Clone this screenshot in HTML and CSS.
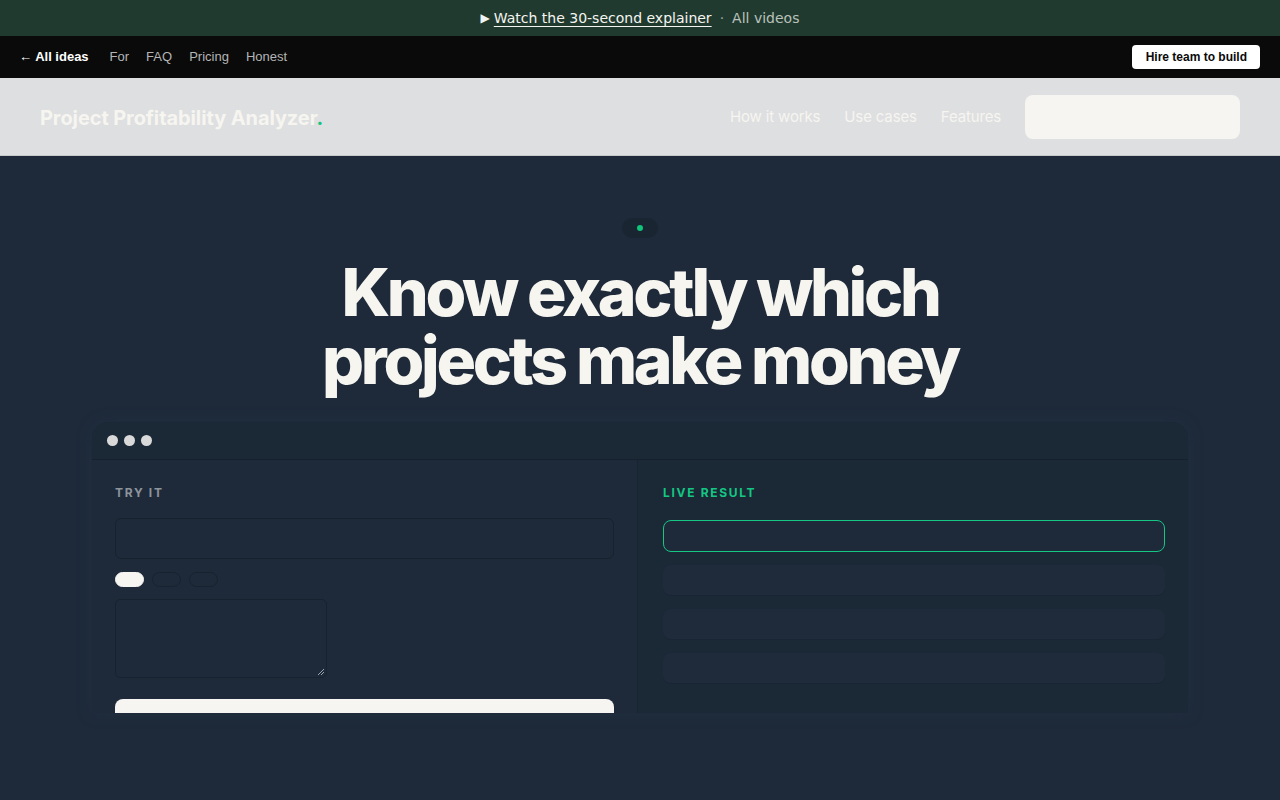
FILE: index.html
```html
<!DOCTYPE html>
<html>
<head>
<meta charset="utf-8">
<link rel="stylesheet" href="styles.css">
</head>
<body>
<div class="promo">
  <span class="play">▶</span> <a class="promo-link" href="#">Watch the 30-second explainer</a>
  <span class="sep">·</span>
  <a class="promo-all" href="#">All videos</a>
</div>
<nav class="topnav">
  <div class="topnav-left">
    <a class="back" href="#">← All ideas</a>
    <a class="tlink" href="#">For</a>
    <a class="tlink" href="#">FAQ</a>
    <a class="tlink" href="#">Pricing</a>
    <a class="tlink" href="#">Honest</a>
  </div>
  <a class="hire" href="#">Hire team to build</a>
</nav>
<header class="site-header">
  <div class="logo">Project Profitability Analyzer<span class="dot">.</span></div>
  <div class="header-right">
    <a class="hlink" href="#">How it works</a>
    <a class="hlink" href="#">Use cases</a>
    <a class="hlink" href="#">Features</a>
    <span class="cta"></span>
  </div>
</header>
<main class="hero">
  <div class="pill"><span class="pill-dot"></span></div>
  <h1 class="title"><span class="tline">Know exactly which</span><span class="tline">projects make money</span></h1>
  <div class="window">
    <div class="titlebar">
      <span class="wdot"></span><span class="wdot"></span><span class="wdot"></span>
    </div>
    <div class="panes">
      <div class="pane-left">
        <div class="eyebrow">TRY IT</div>
        <div class="input"></div>
        <div class="chips">
          <span class="chip active"></span>
          <span class="chip"></span>
          <span class="chip"></span>
        </div>
        <div class="textarea"><svg class="grip" width="8" height="8" viewBox="0 0 8 8"><path d="M7 1L1 7M7 4L4 7" stroke="#9aa3ad" stroke-width="1"/></svg></div>
        <div class="submit"></div>
      </div>
      <div class="pane-right">
        <div class="eyebrow green">LIVE RESULT</div>
        <div class="result highlight"></div>
        <div class="result"></div>
        <div class="result"></div>
        <div class="result"></div>
      </div>
    </div>
  </div>
</main>
</body>
</html>
```
FILE: styles.css
```css
* { box-sizing: border-box; }
html, body { margin: 0; padding: 0; }
body {
  background: #1e2a3a;
  font-family: "DejaVu Sans", sans-serif;
  height: 800px;
  overflow: hidden;
}
a { text-decoration: none; color: inherit; }

.promo {
  height: 36px;
  background: #213a2f;
  display: flex;
  align-items: center;
  justify-content: center;
  gap: 6px;
  font-size: 14px;
  color: #f3f3f3;
}
.promo .play { font-size: 12px; margin-right: -2px; }
.promo-link { text-decoration: underline; text-underline-offset: 3px; color: #f5f5f0; }
.sep { color: #9aa49e; margin: 0 2px; }
.promo-all { color: #b9c1bb; }

.topnav {
  height: 42px;
  background: #0a0a0a;
  display: flex;
  align-items: center;
  justify-content: space-between;
  padding: 0 20px 1px 19px;
  font-family: "Liberation Sans", Arial, sans-serif;
  font-size: 13px;
}
.topnav-left { display: flex; align-items: center; }
.back { color: #fff; font-weight: 700; margin-right: 21px; }
.tlink { color: #b5b5b5; margin-right: 17px; }
.hire {
  background: #fff;
  color: #0a0a0a;
  font-weight: 700;
  font-size: 12px;
  padding: 5px 13px 5px 14px;
  border-radius: 4px;
  line-height: 14px;
  margin-top: 1px;
}

.site-header {
  height: 78px;
  background: #dedfe1;
  border-bottom: 1px solid #c9cacc;
  display: flex;
  align-items: center;
  justify-content: space-between;
  padding: 0 40px;
}
.logo {
  font-family: Inter, sans-serif;
  font-weight: 700;
  font-size: 20px;
  letter-spacing: -0.005em;
  color: #f6f5f0;
  margin-top: 2px;
}
.logo .dot { color: #10c47a; }
.header-right { display: flex; align-items: center; }
.hlink {
  font-family: Inter, sans-serif;
  font-size: 15px;
  letter-spacing: -0.01em;
  color: #f6f5f0;
  margin-right: 24px;
}
.cta {
  width: 215px;
  height: 44px;
  background: #f6f5f1;
  border-radius: 8px;
}

.hero {
  display: flex;
  flex-direction: column;
  align-items: center;
  padding-top: 62px;
}
.pill {
  width: 36px;
  height: 20px;
  border-radius: 10px;
  background: #1a2532;
  display: flex;
  align-items: center;
  justify-content: center;
}
.pill-dot {
  width: 6px; height: 6px; border-radius: 50%;
  background: #10c47a;
}
.title {
  margin: 20px 0 0;
  font-family: Inter, sans-serif;
  font-weight: 800;
  font-size: 66px;
  line-height: 68px;
  letter-spacing: -0.05em;
  color: #f6f5f0;
  text-align: center;
  display: flex;
  flex-direction: column;
  align-items: center;
}
.tline { display: block; height: 68px; }
.window {
  margin-top: 28px;
  width: 1096px;
  height: 291px;
  overflow: hidden;
  background: #1b2836;
  border-radius: 16px 16px 0 0;
  box-shadow: 0 0 14px 2px rgba(40, 56, 76, 0.3);
  display: flex;
  flex-direction: column;
}
.titlebar {
  height: 38px;
  flex: none;
  display: flex;
  align-items: center;
  gap: 6px;
  padding-left: 15px;
  border-bottom: 1px solid #17212d;
}
.wdot { width: 11px; height: 11px; border-radius: 50%; background: #d9d9d9; }
.panes { display: flex; flex: 1; }
.pane-left {
  width: 546px;
  background: #1e2a3a;
  padding: 26px 23px 0;
  border-right: 1px solid #1a2431;
}
.pane-right {
  flex: 1;
  background: #1b2836;
  padding: 26px 23px 0 25px;
}
.eyebrow {
  font-family: Inter, sans-serif;
  font-size: 12px;
  font-weight: 700;
  letter-spacing: 0.14em;
  color: #8d949c;
  line-height: 14px;
}
.eyebrow.green { color: #14c784; }
.input {
  margin-top: 18px;
  height: 41px;
  border: 1px solid #18222e;
  border-radius: 6px;
  background: #1e2a3a;
}
.chips { display: flex; gap: 8px; margin-top: 13px; }
.chip {
  width: 29px; height: 15px; border-radius: 8px;
  border: 1px solid #18222e;
}
.chip.active { background: #f6f5f1; border-color: #f6f5f1; }
.textarea {
  position: relative;
  margin-top: 12px;
  width: 212px;
  height: 79px;
  border: 1px solid #18222e;
  border-radius: 5px;
}
.grip { position: absolute; right: 1px; bottom: 1px; }
.submit {
  margin-top: 21px;
  height: 40px;
  background: #f6f5f1;
  border-radius: 8px;
}
.result {
  margin-top: 13px;
  height: 31px;
  background: #1f2b3b;
  border-bottom: 1px solid #1a2533;
  border-radius: 8px;
}
.result.highlight {
  margin-top: 20px;
  height: 32px;
  background: #1e2a3a;
  border: 1px solid #14c784;
}
```
